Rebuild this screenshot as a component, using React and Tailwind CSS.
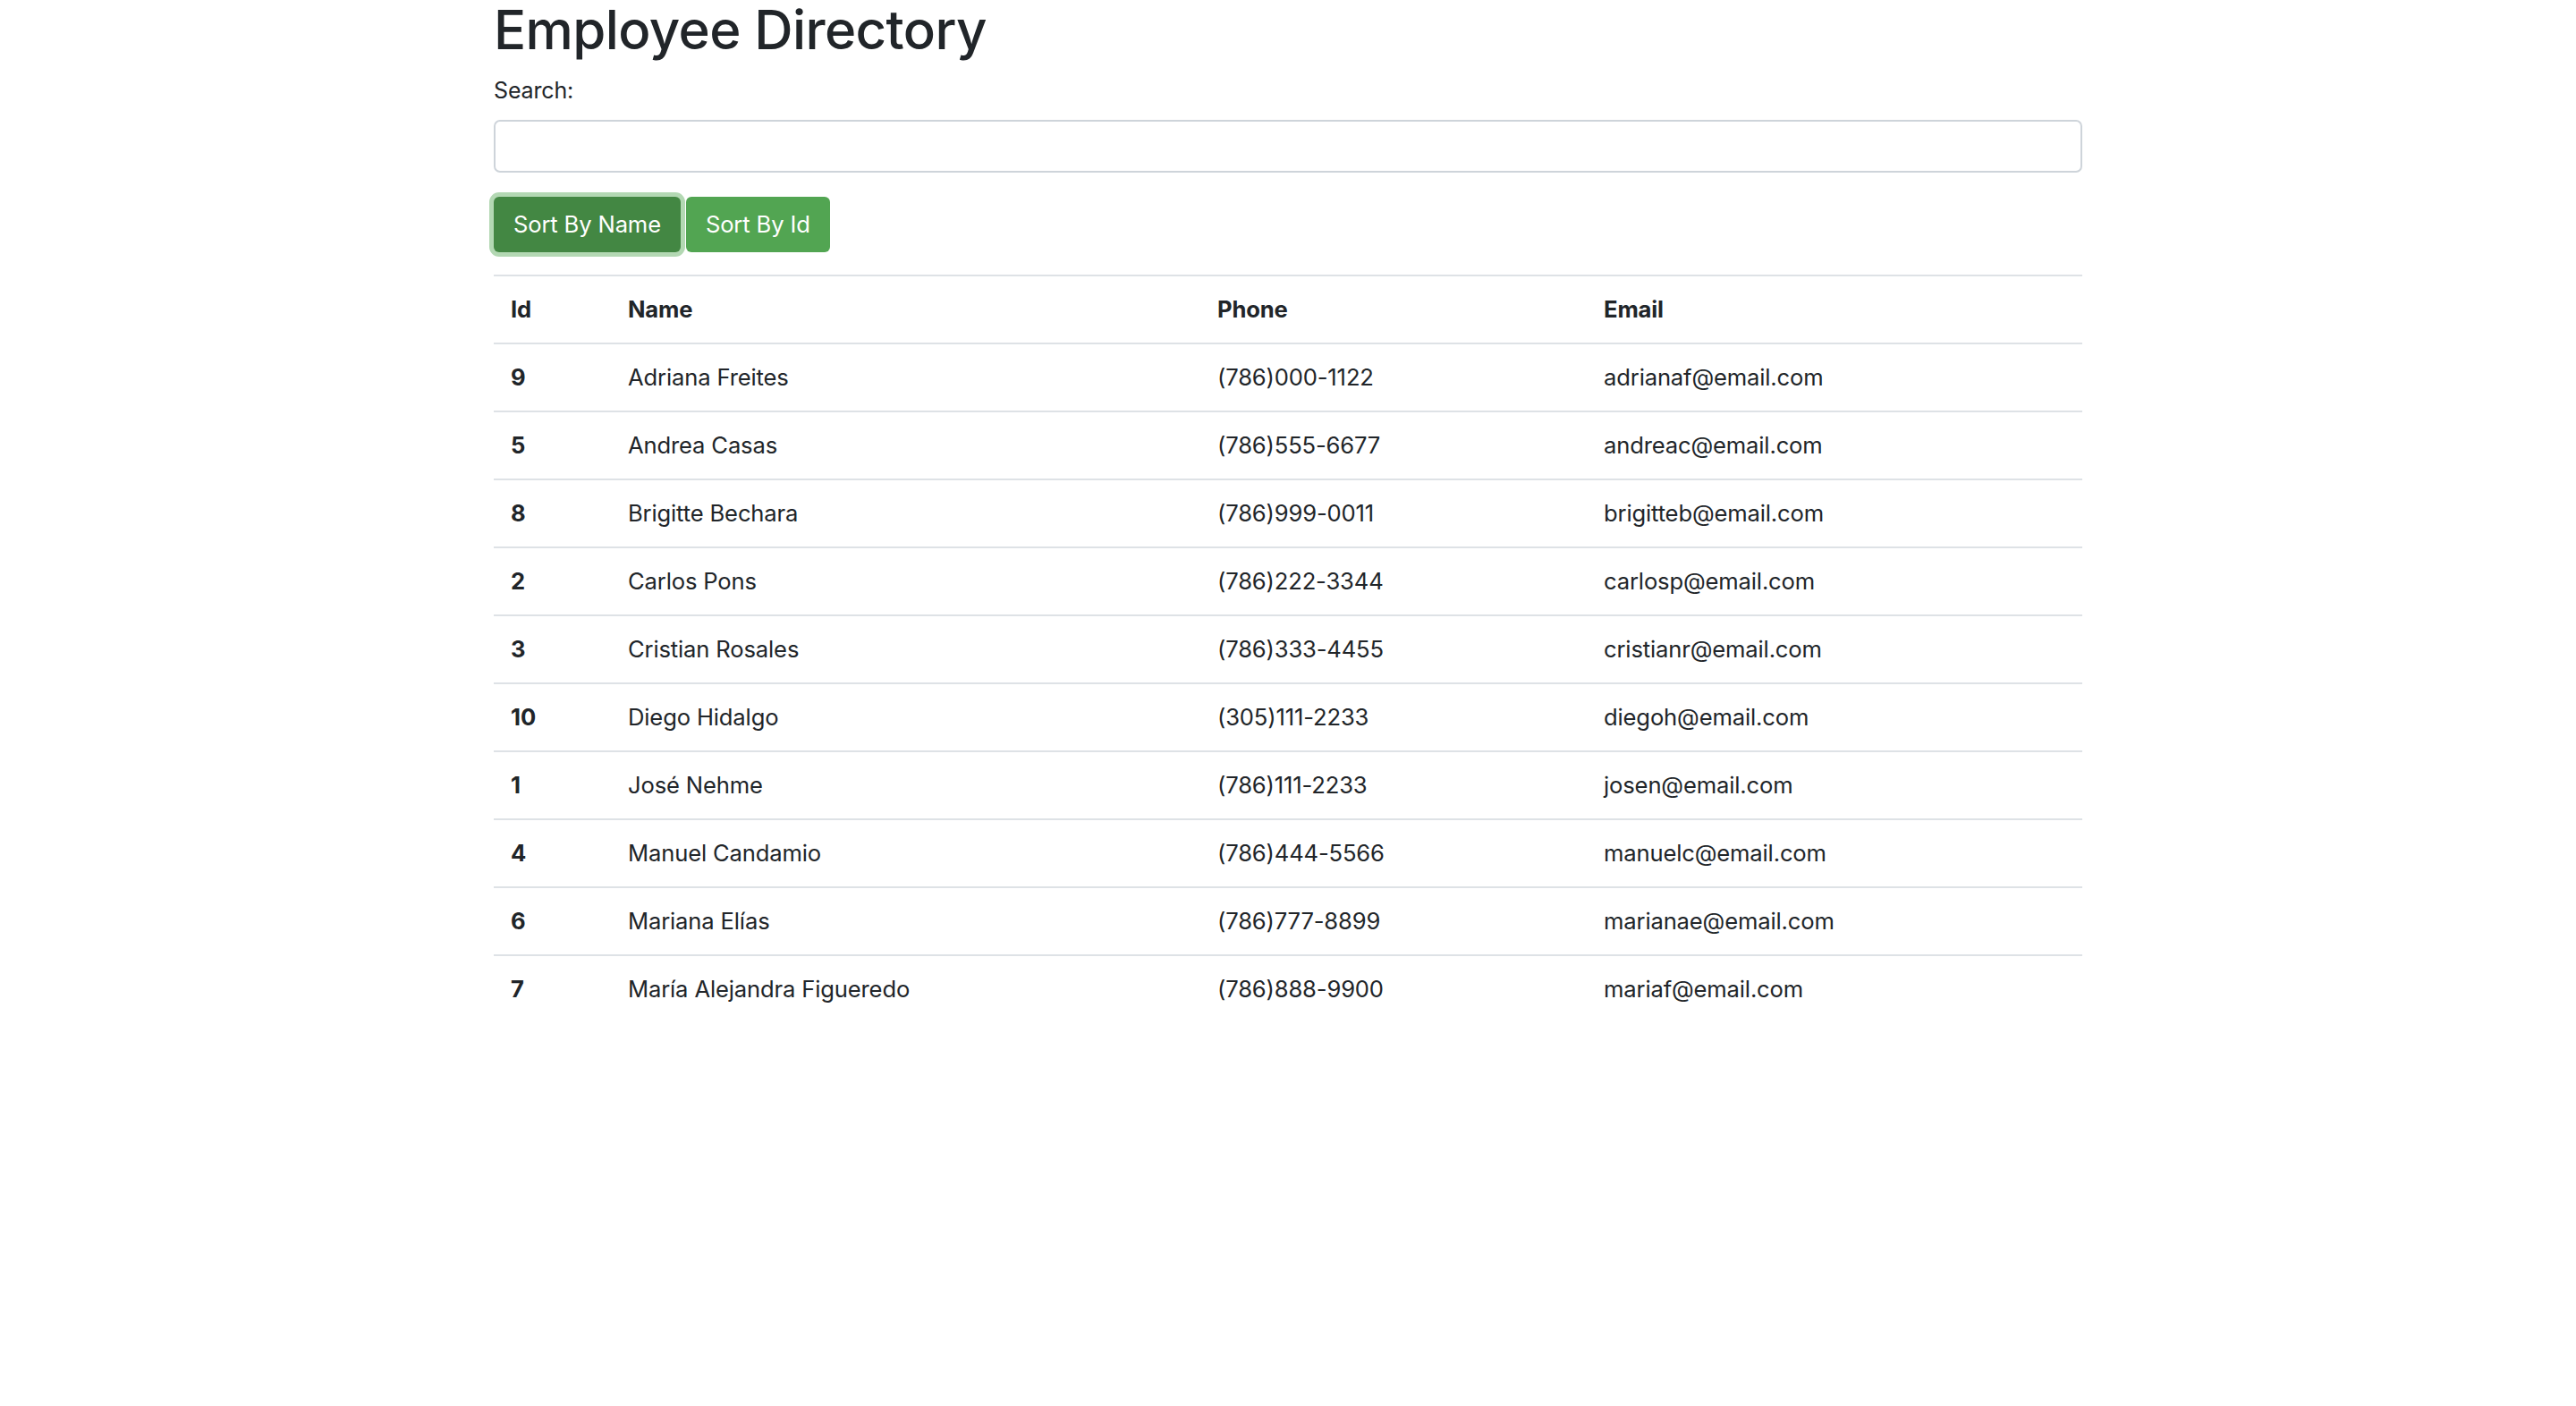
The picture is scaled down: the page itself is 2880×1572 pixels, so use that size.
const EMPLOYEES = [
  { id: 9, name: 'Adriana Freites', phone: '(786)000-1122', email: 'adrianaf@email.com' },
  { id: 5, name: 'Andrea Casas', phone: '(786)555-6677', email: 'andreac@email.com' },
  { id: 8, name: 'Brigitte Bechara', phone: '(786)999-0011', email: 'brigitteb@email.com' },
  { id: 2, name: 'Carlos Pons', phone: '(786)222-3344', email: 'carlosp@email.com' },
  { id: 3, name: 'Cristian Rosales', phone: '(786)333-4455', email: 'cristianr@email.com' },
  { id: 10, name: 'Diego Hidalgo', phone: '(305)111-2233', email: 'diegoh@email.com' },
  { id: 1, name: 'José Nehme', phone: '(786)111-2233', email: 'josen@email.com' },
  { id: 4, name: 'Manuel Candamio', phone: '(786)444-5566', email: 'manuelc@email.com' },
  { id: 6, name: 'Mariana Elías', phone: '(786)777-8899', email: 'marianae@email.com' },
  { id: 7, name: 'María Alejandra Figueredo', phone: '(786)888-9900', email: 'mariaf@email.com' },
];

const cell = 'px-[19px] pt-[18px] pb-[18px] leading-[38px] border-t-2 border-[#dee2e6] text-left align-top';

export default function App() {
  return (
    <div className="min-h-screen bg-white">
      <div className="w-[1776px] mx-auto text-[#212529] font-['Inter','Liberation_Sans',sans-serif] text-[25.6px] tracking-[-0.15px]">
        <h1 className="text-[60px] leading-[66px] font-medium tracking-[-0.6px]">Employee Directory</h1>

        <label className="block mt-[16px] leading-[38px] text-[25px]">Search:</label>
        <input
          type="text"
          className="block w-full h-[59px] mt-[14px] border-2 border-[#ced4da] rounded-[7px] px-[19px] outline-none"
        />

        <div className="flex gap-[6px] mt-[27px]">
          <button className="h-[62px] px-[22px] rounded-[6px] bg-[#438743] text-white ring-[5px] ring-[#b3d8b3]">
            Sort By Name
          </button>
          <button className="h-[62px] px-[22px] rounded-[6px] bg-[#52a552] text-white">
            Sort By Id
          </button>
        </div>

        <table className="w-full mt-[25px] table-fixed border-separate border-spacing-0">
          <thead>
            <tr>
              <th className={`${cell} w-[131px] font-bold`}>Id</th>
              <th className={`${cell} w-[659px] font-bold`}>Name</th>
              <th className={`${cell} w-[432px] font-bold`}>Phone</th>
              <th className={`${cell} font-bold`}>Email</th>
            </tr>
          </thead>
          <tbody>
            {EMPLOYEES.map((e) => (
              <tr key={e.id}>
                <th className={`${cell} font-bold`}>{e.id}</th>
                <td className={cell}>{e.name}</td>
                <td className={cell}>{e.phone}</td>
                <td className={cell}>{e.email}</td>
              </tr>
            ))}
          </tbody>
        </table>
      </div>
    </div>
  );
}
